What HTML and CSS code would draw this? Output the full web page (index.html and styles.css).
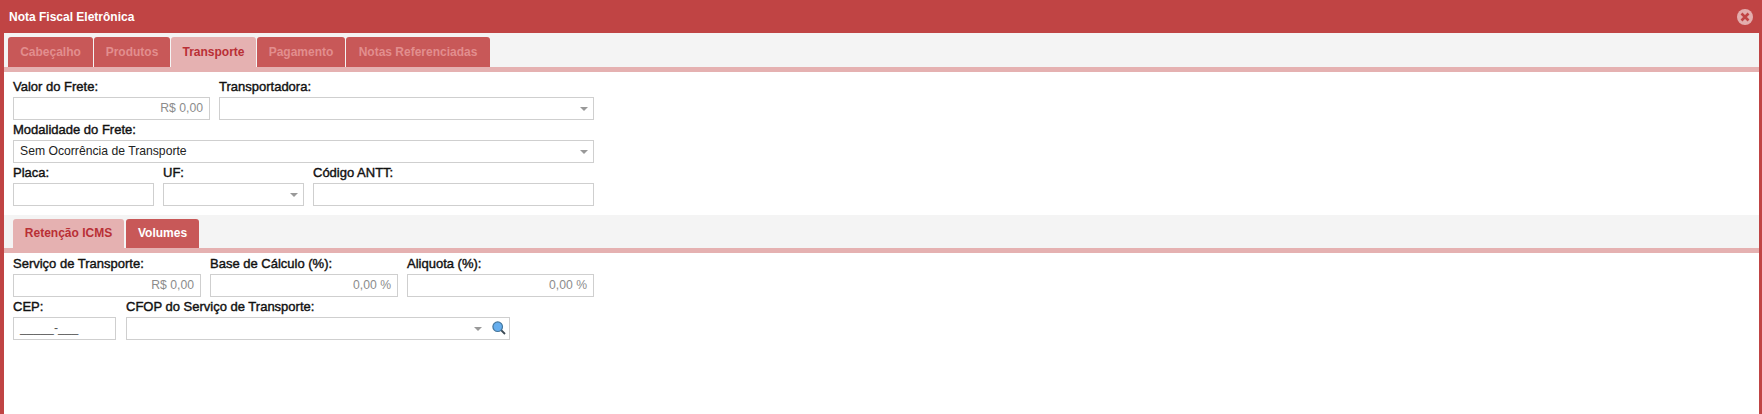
FILE: index.html

```html
<!DOCTYPE html>
<html>
  <head>
    <meta charset="UTF-8" />
    <title>Nota Fiscal Eletrônica</title>
    <link rel="stylesheet" href="styles.css">
  </head>
  <body>
    <div class="window">
      <div class="window-title">
        <span>Nota Fiscal Eletrônica</span>
        <svg class="close-icon" width="16" height="16" viewBox="0 0 16 16">
          <circle cx="8" cy="8" r="8" fill="#e3adad" />
          <path d="M4.5 4.5 L11.5 11.5 M11.5 4.5 L4.5 11.5" stroke="#c04444" stroke-width="2.6" fill="none" />
        </svg>
      </div>
      <div class="window-body">
        <div class="tab-strip">
          <div class="tab w-cab">Cabeçalho</div>
          <div class="tab w-pro">Produtos</div>
          <div class="tab tab-active w-tra">Transporte</div>
          <div class="tab w-pag">Pagamento</div>
          <div class="tab w-not">Notas Referenciadas</div>
        </div>
        <div class="form">
          <div class="row">
            <div class="field w-197">
              <div class="label">Valor do Frete:</div>
              <div class="input num">R$ 0,00</div>
            </div>
            <div class="field w-375">
              <div class="label">Transportadora:</div>
              <div class="input combo"><span class="caret"></span></div>
            </div>
          </div>
          <div class="row">
            <div class="field w-581">
              <div class="label">Modalidade do Frete:</div>
              <div class="input combo">Sem Ocorrência de Transporte<span class="caret"></span></div>
            </div>
          </div>
          <div class="row">
            <div class="field w-141">
              <div class="label">Placa:</div>
              <div class="input"></div>
            </div>
            <div class="field w-141">
              <div class="label">UF:</div>
              <div class="input combo"><span class="caret"></span></div>
            </div>
            <div class="field w-281">
              <div class="label">Código ANTT:</div>
              <div class="input"></div>
            </div>
          </div>
        </div>
        <div class="tab-strip sub-strip">
          <div class="tab sub-tab tab-active w-ret">Retenção ICMS</div>
          <div class="tab sub-tab tab-on w-vol">Volumes</div>
        </div>
        <div class="form sub-form">
          <div class="row">
            <div class="field w-188">
              <div class="label">Serviço de Transporte:</div>
              <div class="input num">R$ 0,00</div>
            </div>
            <div class="field w-188">
              <div class="label">Base de Cálculo (%):</div>
              <div class="input num">0,00 %</div>
            </div>
            <div class="field w-187">
              <div class="label">Aliquota (%):</div>
              <div class="input num">0,00 %</div>
            </div>
          </div>
          <div class="row row-wide">
            <div class="field w-103">
              <div class="label">CEP:</div>
              <div class="input mask">_____-___</div>
            </div>
            <div class="field w-384">
              <div class="label">CFOP do Serviço de Transporte:</div>
              <div class="input combo">
                <span class="caret caret-search"></span>
                <svg class="search-icon" width="14" height="14" viewBox="0 0 14 14">
                  <path d="M8.5 8.5 L13 13" stroke="#3c4a55" stroke-width="1.8" fill="none" />
                  <circle cx="5.7" cy="5.7" r="4.8" fill="#66aeee" stroke="#44769c" stroke-width="1.2" />
                </svg>
              </div>
            </div>
          </div>
        </div>
      </div>
    </div>
  </body>
</html>
```

FILE: styles.css

```css
html,
body {
  margin: 0;
  padding: 0;
  width: 100%;
  height: 100%;
  overflow: hidden;
}
body {
  font-family: "Liberation Sans", Arial, sans-serif;
  font-size: 12.2px;
  color: #111;
}
.window {
  height: 100%;
  box-sizing: border-box;
  background: #c04444;
  padding: 0 3px 0 4px;
  display: flex;
  flex-direction: column;
}
.window-title {
  height: 33px;
  flex-shrink: 0;
  display: flex;
  align-items: center;
  justify-content: space-between;
  padding: 0 3px 0 5px;
  color: #fff;
  font-size: 12px;
  font-weight: bold;
}
.close-icon {
  margin-right: 3px;
}
.window-body {
  flex: 1;
  background: #fff;
}
.tab-strip {
  height: 39px;
  box-sizing: border-box;
  background: #f4f4f4;
  border-bottom: 5px solid #e5b1b1;
  display: flex;
  align-items: flex-end;
  gap: 1px;
  padding-left: 4px;
}
.tab {
  height: 30px;
  box-sizing: border-box;
  background: #c85858;
  color: #e28e8e;
  font-size: 12px;
  font-weight: bold;
  text-align: center;
  line-height: 30px;
  border-radius: 3px 3px 0 0;
}
.tab-active {
  background: #e5b1b1;
  color: #b92f35;
}
.tab-on {
  color: #fff;
}
.w-cab { width: 85px; }
.w-pro { width: 76px; }
.w-tra { width: 85px; }
.w-pag { width: 88px; }
.w-not { width: 144px; }
.form {
  padding: 5px 0 0 9px;
  width: 581px;
  height: 138px;
}
.row {
  display: flex;
  gap: 9px;
}
.row-wide {
  gap: 10px;
}
.field {
  flex-shrink: 0;
}
.label {
  height: 20px;
  line-height: 20px;
  font-size: 13px;
  -webkit-text-stroke: 0.4px #111;
}
.input {
  height: 23px;
  box-sizing: border-box;
  border: 1px solid #cfcfcf;
  background: #fff;
  padding: 0 6px;
  line-height: 21px;
  color: #222;
  position: relative;
}
.num {
  text-align: right;
  color: #8c8c8c;
}
.mask {
  color: #555;
}
.caret {
  position: absolute;
  right: 5px;
  top: 9px;
  border-left: 4px solid transparent;
  border-right: 4px solid transparent;
  border-top: 4px solid #999;
}
.caret-search {
  right: 27px;
}
.search-icon {
  position: absolute;
  right: 3px;
  top: 3px;
}
.sub-strip {
  height: 38px;
  padding-left: 9px;
  gap: 2px;
}
.sub-tab {
  height: 29px;
  line-height: 29px;
}
.sub-form {
  height: auto;
  padding-top: 1px;
}
.w-ret { width: 111px; }
.w-vol { width: 73px; }
.w-197 { width: 197px; }
.w-375 { width: 375px; }
.w-581 { width: 581px; }
.w-141 { width: 141px; }
.w-281 { width: 281px; }
.w-188 { width: 188px; }
.w-187 { width: 187px; }
.w-103 { width: 103px; }
.w-384 { width: 384px; }
```
